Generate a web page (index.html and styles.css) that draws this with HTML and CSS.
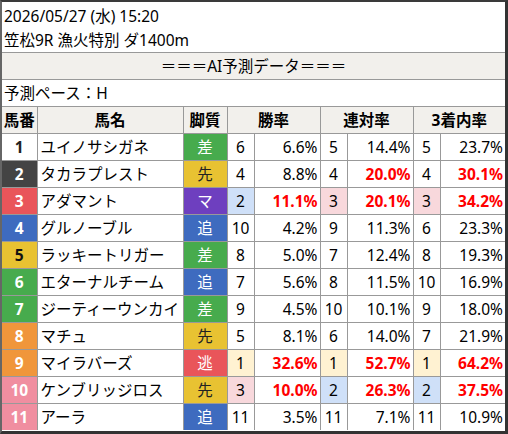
FILE: index.html
```html
<!DOCTYPE html>
<html>
<head>
    <meta charset="UTF-8">
    <title>AI予測</title>
    <link rel="stylesheet" href="styles.css">
</head>
<body>
    <div class="frame">
        <table class="yosoku">
            <colgroup>
                <col class="c-num">
                <col class="c-name">
                <col class="c-style">
                <col class="c-rank"><col class="c-pct">
                <col class="c-rank"><col class="c-pct">
                <col class="c-rank"><col class="c-pct3">
            </colgroup>
            <tr>
                <td colspan="9" class="info">2026/05/27 (水) 15:20<br>笠松9R 漁火特別 ダ1400m</td>
            </tr>
            <tr>
                <td colspan="9" class="title">＝＝＝AI予測データ＝＝＝</td>
            </tr>
            <tr>
                <td colspan="9" class="pace">予測ペース：H</td>
            </tr>
            <tr class="head">
                <td>馬番</td>
                <td>馬名</td>
                <td>脚質</td>
                <td colspan="2">勝率</td>
                <td colspan="2">連対率</td>
                <td colspan="2">3着内率</td>
            </tr>
            <tr>
                <td class="num w1">1</td><td class="name">ユイノサシガネ</td><td class="st sashi">差</td>
                <td class="rk">6</td><td class="pct">6.6%</td>
                <td class="rk">5</td><td class="pct">14.4%</td>
                <td class="rk">5</td><td class="pct">23.7%</td>
            </tr>
            <tr>
                <td class="num w2">2</td><td class="name">タカラプレスト</td><td class="st sen">先</td>
                <td class="rk">4</td><td class="pct">8.8%</td>
                <td class="rk">4</td><td class="pct top">20.0%</td>
                <td class="rk">4</td><td class="pct top">30.1%</td>
            </tr>
            <tr>
                <td class="num w3">3</td><td class="name">アダマント</td><td class="st makuri">マ</td>
                <td class="rk r2">2</td><td class="pct top">11.1%</td>
                <td class="rk r3">3</td><td class="pct top">20.1%</td>
                <td class="rk r3">3</td><td class="pct top">34.2%</td>
            </tr>
            <tr>
                <td class="num w4">4</td><td class="name">グルノーブル</td><td class="st oi">追</td>
                <td class="rk">10</td><td class="pct">4.2%</td>
                <td class="rk">9</td><td class="pct">11.3%</td>
                <td class="rk">6</td><td class="pct">23.3%</td>
            </tr>
            <tr>
                <td class="num w5">5</td><td class="name">ラッキートリガー</td><td class="st sashi">差</td>
                <td class="rk">8</td><td class="pct">5.0%</td>
                <td class="rk">7</td><td class="pct">12.4%</td>
                <td class="rk">8</td><td class="pct">19.3%</td>
            </tr>
            <tr>
                <td class="num w6">6</td><td class="name">エターナルチーム</td><td class="st oi">追</td>
                <td class="rk">7</td><td class="pct">5.6%</td>
                <td class="rk">8</td><td class="pct">11.5%</td>
                <td class="rk">10</td><td class="pct">16.9%</td>
            </tr>
            <tr>
                <td class="num w6">7</td><td class="name">ジーティーウンカイ</td><td class="st sashi">差</td>
                <td class="rk">9</td><td class="pct">4.5%</td>
                <td class="rk">10</td><td class="pct">10.1%</td>
                <td class="rk">9</td><td class="pct">18.0%</td>
            </tr>
            <tr>
                <td class="num w7">8</td><td class="name">マチュ</td><td class="st sen">先</td>
                <td class="rk">5</td><td class="pct">8.1%</td>
                <td class="rk">6</td><td class="pct">14.0%</td>
                <td class="rk">7</td><td class="pct">21.9%</td>
            </tr>
            <tr>
                <td class="num w7">9</td><td class="name">マイラバーズ</td><td class="st nige">逃</td>
                <td class="rk r1">1</td><td class="pct top">32.6%</td>
                <td class="rk r1">1</td><td class="pct top">52.7%</td>
                <td class="rk r1">1</td><td class="pct top">64.2%</td>
            </tr>
            <tr>
                <td class="num w8">10</td><td class="name">ケンブリッジロス</td><td class="st sen">先</td>
                <td class="rk r3">3</td><td class="pct top">10.0%</td>
                <td class="rk r2">2</td><td class="pct top">26.3%</td>
                <td class="rk r2">2</td><td class="pct top">37.5%</td>
            </tr>
            <tr>
                <td class="num w8">11</td><td class="name">アーラ</td><td class="st oi">追</td>
                <td class="rk">11</td><td class="pct">3.5%</td>
                <td class="rk">11</td><td class="pct">7.1%</td>
                <td class="rk">11</td><td class="pct">10.9%</td>
            </tr>
        </table>
    </div>
</body>
</html>
```

FILE: styles.css
```css
body {
    margin: 0;
    background-color: #ffffff;
    font-family: "Noto Sans", "Noto Sans CJK JP", sans-serif;
    font-size: 15.5px;
    color: #000;
}
.frame {
    width: 503px;
    height: 429px;
    border-top: 2px solid #3a3a3a;
    border-left: 2px solid #666;
    border-right: 3px solid #333;
    border-bottom: 3px solid #333;
    overflow: hidden;
}
.yosoku {
    border-collapse: collapse;
    border-style: hidden;
    table-layout: fixed;
    width: 503px;
}
.yosoku td {
    border: 1px solid #999;
    padding: 0;
    line-height: 26px;
    white-space: nowrap;
}
.c-num { width: 35px; }
.c-name { width: 146px; }
.c-style { width: 44px; }
.c-rank { width: 27px; }
.c-pct { width: 66px; }
.c-pct3 { width: 65px; }
.yosoku td.info {
    padding: 2px 0 0 2px;
    line-height: 24px;
}
.yosoku td.title {
    background-color: #f2f0ec;
    text-align: center;
}
.yosoku td.pace {
    padding-left: 2px;
}
.head td {
    background-color: #f2f0ec;
    font-weight: bold;
    text-align: center;
}
.num {
    text-align: center;
    font-weight: bold;
    color: #fff;
}
.w1 { background-color: #fff; color: #222; }
.w2 { background-color: #444; }
.w3 { background-color: #e9555a; }
.w4 { background-color: #3e6bbf; }
.w5 { background-color: #e8c232; color: #111; }
.w6 { background-color: #47ab4d; }
.w7 { background-color: #f0963b; }
.w8 { background-color: #f08ea0; }
.yosoku td.name {
    padding-left: 3px;
}
.st {
    text-align: center;
    color: #fff;
}
.sashi { background-color: #47ab4d; }
.sen { background-color: #e8c232; color: #222; }
.makuri { background-color: #6e3fbf; }
.oi { background-color: #3e6bbf; }
.nige { background-color: #e9555a; }
.rk {
    text-align: center;
}
.r1 { background-color: #fff2d2; }
.r2 { background-color: #cfe0f8; }
.r3 { background-color: #f8d8dc; }
.yosoku td.pct {
    text-align: right;
    padding-right: 2px;
}
.top {
    color: #ff0000;
    font-weight: bold;
}
```
